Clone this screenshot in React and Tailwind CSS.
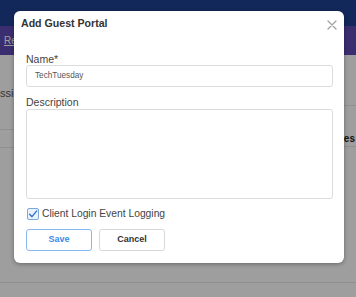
import React from 'react';

const App = () => {
    return (
        <div className="relative w-[356px] h-[297px] overflow-hidden bg-white font-['Liberation_Sans',Arial,sans-serif]">
            {/* page behind the dialog */}
            <div className="h-[26px] bg-[#1f4291]" />
            <div className="h-[29px] bg-[#5e49b5] flex items-center px-1">
                <span className="text-[10px] text-white underline">Re</span>
            </div>
            <div className="h-[242px] bg-white flex">
                <div className="w-[180px] flex flex-col">
                    <div className="h-[74px] flex items-end pb-[28px]">
                        <span className="text-[11px] text-[#555]">ssions</span>
                    </div>
                    <div className="h-[18px] border-t border-gray-200" />
                    <div className="h-[136px] border-t border-b border-gray-200" />
                </div>
                <div className="flex-1 flex flex-col">
                    <div className="h-[51px] border-b border-gray-200" />
                    <div className="h-[41px] border-b border-gray-200 flex items-end justify-end pb-[2px] pr-[1px]">
                        <span className="text-[10px] leading-[10px] font-bold text-[#222]">Names</span>
                    </div>
                    <div className="h-[136px] border-b border-gray-200" />
                </div>
            </div>

            {/* overlay */}
            <div className="absolute inset-0 bg-black/[0.38]" />

            {/* dialog */}
            <div className="absolute left-[14px] top-[11px] w-[330px] h-[252px] bg-white rounded-md shadow-[0_1px_4px_rgba(0,0,0,0.35)]">
                <div className="flex items-center justify-between h-[25px] pl-[7px] pr-[7px]">
                    <h3 className="text-[10.6px] font-bold text-[#333]">Add Guest Portal</h3>
                    <svg width="10" height="10" viewBox="0 0 10 10" className="mt-[2px]">
                        <path d="M1 1L9 9M9 1L1 9" stroke="#a3a3a3" strokeWidth="1.3" strokeLinecap="round" />
                    </svg>
                </div>
                <div className="px-3 pt-[17px]">
                    <label className="block text-[10.5px] leading-[12px] text-[#444]">Name*</label>
                    <div className="h-[22px] w-[307px] border border-[#dcdcdc] rounded-[3px] flex items-center px-[8px]">
                        <span className="text-[8.2px] text-[#555]">TechTuesday</span>
                    </div>
                    <label className="block mt-[9px] text-[10.5px] leading-[12px] text-[#444]">Description</label>
                    <div className="mt-[1px] h-[90px] w-[307px] border border-[#dcdcdc] rounded-[3px]" />
                    <div className="flex items-center mt-[9px] ml-[1px] gap-[3px] h-[12px]">
                        <div className="w-[12px] h-[12px] rounded-[2px] border border-[#7aa7e0] bg-[#eaf2fc] flex items-center justify-center">
                            <svg width="10" height="10" viewBox="0 0 10 10">
                                <path d="M1.6 5.3L4 7.7L8.7 1.9" fill="none" stroke="#2d6fd0" strokeWidth="1.3" strokeLinecap="round" strokeLinejoin="round" />
                            </svg>
                        </div>
                        <span className="text-[10.3px] leading-[12px] text-[#444]">Client Login Event Logging</span>
                    </div>
                    <div className="flex gap-[7px] mt-[9px]">
                        <button className="w-[66px] h-[22px] rounded-[3px] border border-[#8ab9f2] text-[9px] font-bold text-[#3d8ae8] bg-white">Save</button>
                        <button className="w-[66px] h-[22px] rounded-[3px] border border-[#d8d8d8] text-[9px] font-bold text-[#333] bg-white">Cancel</button>
                    </div>
                </div>
            </div>
        </div>
    );
};

export default App;
